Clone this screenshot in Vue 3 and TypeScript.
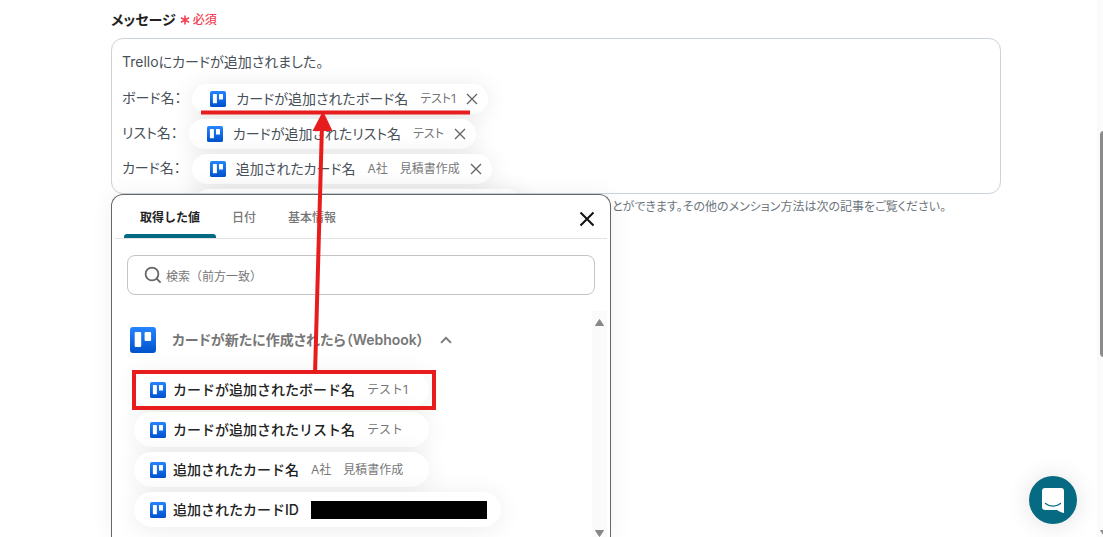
<script setup lang="ts">
import { ref } from 'vue'

interface Field {
  name: string
  sample: string
  masked?: boolean
}

interface Line {
  label: string
  name: string
  sample: string
}

const lines: Line[] = [
  { label: 'ボード名：', name: 'カードが追加されたボード名', sample: 'テスト1' },
  { label: 'リスト名：', name: 'カードが追加されたリスト名', sample: 'テスト' },
  { label: 'カード名：', name: '追加されたカード名', sample: 'A社　見積書作成' },
]

const fields: Field[] = [
  { name: 'カードが追加されたボード名', sample: 'テスト1' },
  { name: 'カードが追加されたリスト名', sample: 'テスト' },
  { name: '追加されたカード名', sample: 'A社　見積書作成' },
  { name: '追加されたカードID', sample: '', masked: true },
]

const tabs = ['取得した値', '日付', '基本情報']
const activeTab = ref(tabs[0])
const query = ref('')
</script>

<template>
  <main class="page">
    <svg class="defs" width="0" height="0" aria-hidden="true">
      <defs>
        <linearGradient id="trello-blue" x1="0" y1="0" x2="0" y2="1">
          <stop offset="0" stop-color="#2684ff" />
          <stop offset="1" stop-color="#0052cc" />
        </linearGradient>
        <symbol id="trello" viewBox="0 0 26 26">
          <rect width="26" height="26" rx="3" fill="url(#trello-blue)" />
          <rect x="4.700" y="5" width="6.500" height="15" rx="1" fill="#fff" />
          <rect x="14.600" y="5" width="6.500" height="9" rx="1" fill="#fff" />
        </symbol>
      </defs>
    </svg>

    <section class="form">
      <h2 id="message-label" class="label">
        メッセージ
        <span class="required">
          <svg width="10" height="10" viewBox="0 0 10 10" aria-hidden="true">
            <path d="M5 .6v8.8M1 2.8l8 4.4M9 2.8l-8 4.4" stroke="#f43f55" stroke-width="1.6" />
          </svg>
          必須
        </span>
      </h2>

      <div class="field">
        <div class="editor" role="textbox" aria-labelledby="message-label">
          <p class="intro">Trelloにカードが追加されました。</p>
          <div v-for="line in lines" :key="line.label" class="line">
            <span class="line-label">{{ line.label }}</span>
            <span class="chip">
              <svg class="icon" aria-hidden="true"><use href="#trello" /></svg>
              <span class="chip-name">{{ line.name }}</span>
              <span class="sample">{{ line.sample }}</span>
              <button type="button" class="remove" aria-label="削除">
                <svg width="12" height="12" viewBox="0 0 12 12"><path d="M1 1l10 10M11 1L1 11" /></svg>
              </button>
            </span>
          </div>
          <div class="line"><span class="chip chip-empty"></span></div>
        </div>

        <section class="picker">
          <header class="picker-head">
            <nav class="tabs" role="tablist">
              <button
                v-for="tab in tabs"
                :key="tab"
                type="button"
                role="tab"
                class="tab"
                :class="{ active: tab === activeTab }"
                :aria-selected="tab === activeTab"
                @click="activeTab = tab"
              >
                {{ tab }}
              </button>
            </nav>
            <button type="button" class="close" aria-label="閉じる">
              <svg width="16" height="16" viewBox="0 0 16 16"><path d="M1.5 1.5l13 13M14.5 1.5l-13 13" /></svg>
            </button>
          </header>

          <label class="search">
            <svg width="18" height="18" viewBox="0 0 18 18" aria-hidden="true">
              <circle cx="8" cy="8" r="6.4" />
              <path d="M12.6 12.6l4 4" />
            </svg>
            <input v-model="query" type="text" aria-label="検索" placeholder="検索（前方一致）" />
          </label>

          <div class="results">
            <div class="group">
              <button type="button" class="group-head">
                <svg class="group-icon" aria-hidden="true"><use href="#trello" /></svg>
                <span>カードが新たに作成されたら（Webhook）</span>
                <svg class="chevron" width="12" height="8" viewBox="0 0 12 8"><path d="M1 6.8L6 1.8l5 5" /></svg>
              </button>
              <ul class="fields">
                <li v-for="field in fields" :key="field.name">
                  <button type="button" class="option" :class="{ wide: field.masked }">
                    <svg class="icon" aria-hidden="true"><use href="#trello" /></svg>
                    <span class="option-name">{{ field.name }}</span>
                    <span v-if="field.masked" class="mask"></span>
                    <span v-else class="sample">{{ field.sample }}</span>
                  </button>
                </li>
              </ul>
            </div>
            <div class="track" aria-hidden="true">
              <svg width="11" height="9" viewBox="0 0 11 9"><path d="M5.5 1.5l4 6h-8z" /></svg>
              <svg width="11" height="8" viewBox="0 0 11 8"><path d="M1.500 1.500h8l-4 6z" /></svg>
            </div>
          </div>
        </section>
      </div>
      <p class="help">とができます。その他のメンション方法は次の記事をご覧ください。</p>
    </section>

    <svg class="annotation" width="480" height="420" viewBox="0 0 480 420" aria-hidden="true">
      <path d="M201 112.5h269M315 374L322 125" />
      <rect x="134" y="372" width="300" height="36" />
      <path class="head" d="M323 111l9.500 20h-20z" />
    </svg>

    <button type="button" class="chat" aria-label="チャットを開く">
      <svg width="22" height="25" viewBox="0 0 22 25">
        <path d="M3 0h16a3 3 0 0 1 3 3v22c-3-.6-5-1.700-7-3H3a3 3 0 0 1-3-3V3a3 3 0 0 1 3-3z" fill="#fff" />
        <path d="M3.500 15.500c4.500 3.600 10.500 3.600 15 0" fill="none" stroke="#066a82" stroke-width="1.300" stroke-linecap="round" />
      </svg>
    </button>

    <div class="page-scroll" aria-hidden="true">
      <span class="thumb"></span>
      <svg width="10" height="8" viewBox="0 0 10 8"><path d="M0 1h9L4.500 8z" /></svg>
    </div>
  </main>
</template>

<style>
body {
  margin: 0;
  overflow: hidden;
}
</style>

<style scoped>
* {
  box-sizing: border-box;
}

.page {
  position: relative;
  height: 100vh;
  padding: 10px 102px 0 111px;
  overflow: hidden;
  background: #fff;
  color: #485058;
  font-family: Inter, 'Noto Sans CJK JP', sans-serif;
  font-size: 14px;
  line-height: 20px;
  font-feature-settings: 'palt';
}

button {
  padding: 0;
  border: 0;
  background: none;
  color: inherit;
  font: inherit;
  font-feature-settings: inherit;
  cursor: pointer;
}

svg {
  flex: none;
}

.defs {
  position: absolute;
}

.label {
  display: flex;
  align-items: center;
  gap: 4px;
  margin: 0 0 8px;
  color: #222;
  font-size: 14px;
  font-weight: 600;
}

.required {
  display: flex;
  align-items: center;
  gap: 3px;
  color: #f43f55;
  font-size: 12px;
  font-weight: 500;
}

.field {
  position: relative;
}

.editor {
  height: 156px;
  padding: 13px 10px 0;
  overflow: hidden;
  border: 1px solid #cbd2d9;
  border-radius: 12px;
}

.intro {
  margin: 0 0 9px;
}

.line {
  display: flex;
  align-items: center;
  gap: 11px;
  height: 35px;
}

.line-label {
  padding-bottom: 2px;
}

.chip {
  display: flex;
  align-items: center;
  height: 30px;
  padding: 0 10px 0 18px;
  border-radius: 15px;
  background: #fff;
  box-shadow: 0 2px 24px rgba(0, 0, 0, 0.09);
}

.chip-empty {
  width: 328px;
  margin-left: 72px;
}

.icon {
  width: 16px;
  height: 16px;
}

.chip-name {
  margin-left: 10px;
}

.sample {
  margin-left: 12px;
  color: #777;
  font-size: 12px;
  font-weight: 400;
}

.remove {
  display: flex;
  margin-left: 10px;
}

.remove path {
  stroke: #666;
  stroke-width: 1.4;
}

.help {
  margin: 3px 0 0 501px;
  color: #6c757d;
  font-size: 12px;
}

.picker {
  position: absolute;
  top: 156px;
  left: 0;
  display: flex;
  flex-direction: column;
  width: 500px;
  height: calc(100vh - 194px);
  border: 1px solid #666;
  border-bottom: 0;
  border-radius: 12px 12px 0 0;
  background: #fff;
  box-shadow: 0 0 24px rgba(0, 0, 0, 0.06);
}

.picker-head {
  display: flex;
  flex: none;
  justify-content: space-between;
  height: 44px;
  margin: 0 3px;
  padding: 0 12px 0 9px;
  border-bottom: 1px solid #e2e2e2;
}

.tabs {
  display: flex;
}

.tab {
  height: 43px;
  padding: 2px 16px 0;
  color: #777;
  font-size: 12px;
  font-weight: 500;
  font-feature-settings: normal;
}

.tab.active {
  position: relative;
  color: #222;
  font-weight: 600;
}

.tab.active::after {
  position: absolute;
  right: 0;
  bottom: 0;
  left: 0;
  height: 4px;
  border-radius: 3px 3px 0 0;
  background: #066a82;
  content: '';
}

.close {
  display: flex;
  align-items: center;
  padding-top: 5px;
}

.close path {
  stroke: #111;
  stroke-width: 2;
}

.search {
  display: flex;
  flex: none;
  align-items: center;
  gap: 4px;
  height: 40px;
  margin: 16px 15px;
  padding: 0 16px;
  border: 1px solid #c4c4c4;
  border-radius: 8px;
}

.search svg {
  fill: none;
  stroke: #666;
  stroke-width: 1.8;
}

.search input {
  flex: 1;
  min-width: 0;
  padding: 3px 0 0;
  border: 0;
  outline: 0;
  background: none;
  color: #333;
  font: inherit;
  font-size: 12px;
  font-feature-settings: normal;
}

.search input::placeholder {
  color: #777;
  opacity: 1;
}

.results {
  display: flex;
  flex: 1;
  justify-content: space-between;
  min-height: 0;
  padding-right: 3px;
}

.group {
  padding: 16px 0 0 18px;
}

.group-head {
  display: flex;
  align-items: center;
  color: #777;
  font-weight: 600;
}

.group-icon {
  width: 26px;
  height: 26px;
  margin-right: 16px;
}

.chevron {
  margin-left: 16px;
  fill: none;
  stroke: #777;
  stroke-width: 1.8;
}

.fields {
  display: flex;
  flex-direction: column;
  gap: 5px;
  margin: 19px 0 0 4px;
  padding: 0;
  list-style: none;
}

.option {
  display: flex;
  align-items: center;
  width: 295px;
  height: 35px;
  padding: 0 14px 0 16px;
  border-radius: 18px;
  background: #fff;
  box-shadow: 0 2px 24px rgba(0, 0, 0, 0.08);
  font-feature-settings: normal;
  white-space: nowrap;
}

.option.wide {
  width: 367px;
}

.option-name {
  margin-left: 7px;
  color: #222;
  font-weight: 500;
}

.mask {
  flex: none;
  width: 176px;
  height: 18px;
  margin-left: 12px;
  background: #000;
}

.track {
  display: flex;
  flex-direction: column;
  align-items: center;
  justify-content: space-between;
  width: 15px;
  padding: 7px 0 0;
  background: #fafafa;
  fill: #888;
  stroke: #888;
  stroke-linejoin: round;
}

.annotation {
  position: absolute;
  top: 0;
  left: 0;
  fill: none;
  stroke: #e71d1d;
  stroke-width: 4;
  pointer-events: none;
}

.annotation .head {
  fill: #e71d1d;
  stroke: none;
}

.chat {
  position: absolute;
  right: 26px;
  bottom: 13px;
  display: grid;
  place-items: center;
  width: 48px;
  height: 48px;
  border-radius: 50%;
  background: #066a82;
  box-shadow: 0 1px 24px rgba(0, 0, 0, 0.12);
}

.page-scroll {
  position: absolute;
  top: 0;
  right: 0;
  bottom: 0;
  display: flex;
  flex-direction: column;
  justify-content: space-between;
  width: 6px;
  padding: 131px 0 0 3px;
  overflow: hidden;
  background: #fafafa;
  fill: #888;
}

.thumb {
  width: 8px;
  height: 226px;
  border-radius: 4px;
  background: #8b8b8b;
}
</style>
